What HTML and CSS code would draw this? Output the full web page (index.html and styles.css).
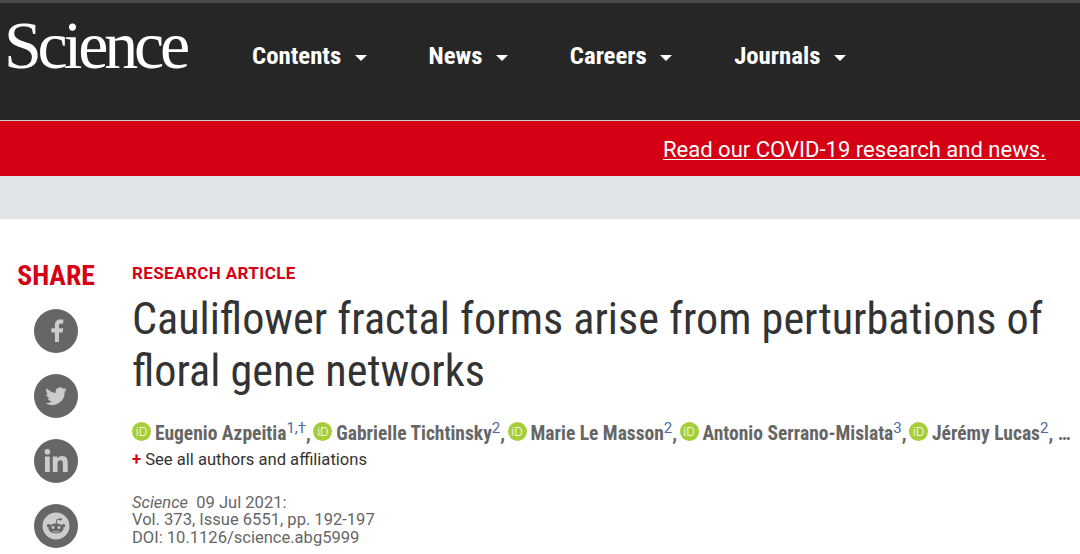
FILE: index.html
```html
<!DOCTYPE html>
<html lang="en">
<head>
<meta charset="utf-8">
<title>Science</title>
<link rel="stylesheet" href="styles.css">
</head>
<body>
<header class="masthead">
  <div class="logo">Science</div>
  <nav class="nav">
    <a class="nav-item">Contents<i class="caret"></i></a>
    <a class="nav-item">News<i class="caret"></i></a>
    <a class="nav-item">Careers<i class="caret"></i></a>
    <a class="nav-item">Journals<i class="caret"></i></a>
  </nav>
</header>
<div class="alert"><a>Read our COVID-19 research and news.</a></div>
<div class="band"></div>
<main class="page">
  <aside class="share">
    <h2 class="share-title">SHARE</h2>
    <div class="share-btn">
      <svg viewBox="0 0 44 44" width="44" height="44"><path d="M25 33V23.600h3.600l.6-4.400H25v-2.700c0-1.300.5-2.100 2.200-2.100h2.100V10.600c-.5-.1-1.800-.1-3-.1-3.200 0-5.400 1.900-5.400 5.500v3.200h-3.600v4.400h3.600V33z"/></svg>
    </div>
    <div class="share-btn">
      <svg viewBox="-2.400 -2.800 48.800 48.800" width="44" height="44"><path d="M34 14.300c-.9.400-1.800.6-2.800.8 1-.6 1.800-1.600 2.200-2.700-1 .6-2 1-3.100 1.200a4.900 4.900 0 0 0-8.400 4.500c-4.100-.2-7.700-2.200-10.100-5.100-.4.700-.7 1.600-.7 2.500 0 1.700.9 3.200 2.200 4.100-.8 0-1.600-.2-2.200-.6v.1c0 2.400 1.700 4.400 3.900 4.800-.4.100-.8.200-1.300.2-.3 0-.6 0-.9-.1.6 2 2.400 3.400 4.600 3.400a9.800 9.800 0 0 1-7.200 2 13.900 13.900 0 0 0 21.400-11.700v-.6c1-.7 1.800-1.600 2.400-2.600z"/></svg>
    </div>
    <div class="share-btn">
      <svg viewBox="0 0 44 44" width="44" height="44"><path d="M11 17.500h4.800V33H11zM13.400 10a2.800 2.800 0 1 1 0 5.600 2.800 2.800 0 0 1 0-5.600zM18.800 17.500h4.600v2.100h.1c.6-1.200 2.200-2.500 4.500-2.500 4.800 0 5.700 3.200 5.700 7.300V33h-4.800v-7.600c0-1.800 0-4.100-2.500-4.100s-2.900 2-2.900 4V33h-4.700z"/></svg>
    </div>
    <div class="share-btn">
      <svg viewBox="0 0 44 44" width="44" height="44"><circle cx="22" cy="22" r="13.500"/><g class="cut"><circle cx="22" cy="24.500" r="7.500" class="head"/><circle cx="14.600" cy="21.800" r="1.800"/><circle cx="29.400" cy="21.800" r="1.800"/><circle cx="26.500" cy="15.300" r="1.300"/></g><circle cx="19" cy="23.500" r="1.400"/><circle cx="25" cy="23.500" r="1.400"/><path class="smile" d="M18.800 27c2 1.300 4.400 1.300 6.400 0"/><path class="ant" d="M22.200 19.500l.8-4.200 3.500.1"/></svg>
    </div>
  </aside>
  <article class="article">
    <div class="kicker">RESEARCH ARTICLE</div>
    <h1 class="title">Cauliflower fractal forms arise from perturbations of floral gene networks</h1>
    <p class="authors">
      <span class="orcid">iD</span><span class="name">Eugenio Azpeitia</span><sup>1,†</sup><span class="name">,</span>
      <span class="orcid">iD</span><span class="name">Gabrielle Tichtinsky</span><sup>2</sup><span class="name">,</span>
      <span class="orcid">iD</span><span class="name">Marie Le Masson</span><sup>2</sup><span class="name">,</span>
      <span class="orcid">iD</span><span class="name">Antonio Serrano-Mislata</span><sup>3</sup><span class="name">,</span>
      <span class="orcid">iD</span><span class="name">Jérémy Lucas</span><sup>2</sup><span class="name">, …</span>
    </p>
    <p class="see-all"><span class="plus">+</span> See all authors and affiliations</p>
    <p class="meta"><em>Science</em>&nbsp; 09 Jul 2021:<br>Vol. 373, Issue 6551, pp. 192-197<br>DOI: 10.1126/science.abg5999</p>
  </article>
</main>
</body>
</html>
```
FILE: styles.css
```css
* { box-sizing: border-box; }
html, body { margin: 0; padding: 0; }
body { width: 1080px; height: 554px; overflow: hidden; background: #fff; font-family: Roboto, sans-serif; }
.masthead { height: 121px; background: #262626; border-top: 3px solid #4a4a4a; border-bottom: 1px solid #cfcfcf; display: flex; align-items: flex-start; }
.logo { font-family: "Liberation Serif", serif; font-size: 68px; line-height: 70px; letter-spacing: -4.200px; color: #fff; margin: 7px 0 0 4px; width: 248px; }
.nav { display: flex; margin-top: 38px; }
.nav-item { font-size: 24.800px; line-height: 30px; font-weight: 700; font-stretch: 75%; color: #fff; display: flex; align-items: center; margin-right: 62px; }
.caret { width: 0; height: 0; border: 6px solid transparent; border-top-color: #fff; border-bottom-width: 0; margin-left: 13.300px; margin-top: 3px; }
.alert { height: 55px; padding-top: 1px; background: #d50014; display: flex; justify-content: flex-end; align-items: center; padding-right: 34px; }
.alert a { color: #fff; font-size: 22.050px; text-decoration: underline; text-underline-offset: 2px; text-decoration-thickness: 1px; }
.band { height: 43px; background: #e0e4e6; }
.page { display: flex; }
.share { width: 132px; display: flex; flex-direction: column; align-items: center; padding: 40px 20px 0 0; }
.share-title { margin: 0 0 16px; font-size: 27.700px; line-height: 34px; font-weight: 700; font-stretch: 75%; color: #d50014; }
.share-btn { width: 44px; height: 44px; border-radius: 50%; background: #666; margin-bottom: 21px; flex: none; }
.share-btn svg { display: block; fill: #ccc; }
.share-btn .cut { fill: #666; }
.share-btn .head { transform-box: fill-box; transform-origin: center; transform: scaleY(.66); }
.share-btn .smile { fill: none; stroke: #ccc; stroke-width: 1; }
.share-btn .ant { fill: none; stroke: #666; stroke-width: 1; }
.article { flex: 1; padding-top: 44px; min-width: 0; }
.kicker { font-size: 17px; line-height: 20px; font-weight: 700; color: #d50014; letter-spacing: .4px; }
.title { margin: 10px 0 0; font-size: 44.200px; line-height: 52px; font-weight: 400; font-stretch: 75%; color: #333; }
.authors { margin: 25px 0 0; font-size: 19.500px; font-weight: 700; font-stretch: 75%; line-height: 24px; white-space: nowrap; color: #666; }
.authors sup { font-size: 15px; font-weight: 400; font-stretch: 100%; line-height: 0; color: #4a6a9a; }
.orcid { display: inline-block; width: 19px; height: 19px; border-radius: 50%; background: #a6ce39; color: #fff; font-size: 13px; font-weight: 300; font-stretch: 100%; line-height: 19px; text-align: center; margin-right: 4px; vertical-align: 4px; }
.name + .orcid { margin-left: -2px; }
.see-all { margin: 3px 0 0; font-size: 16.600px; line-height: 22px; color: #333; }
.plus { color: #d50014; font-weight: 700; }
.meta { margin: 22.500px 0 0; font-size: 16.550px; line-height: 17.500px; color: #666; }
```
